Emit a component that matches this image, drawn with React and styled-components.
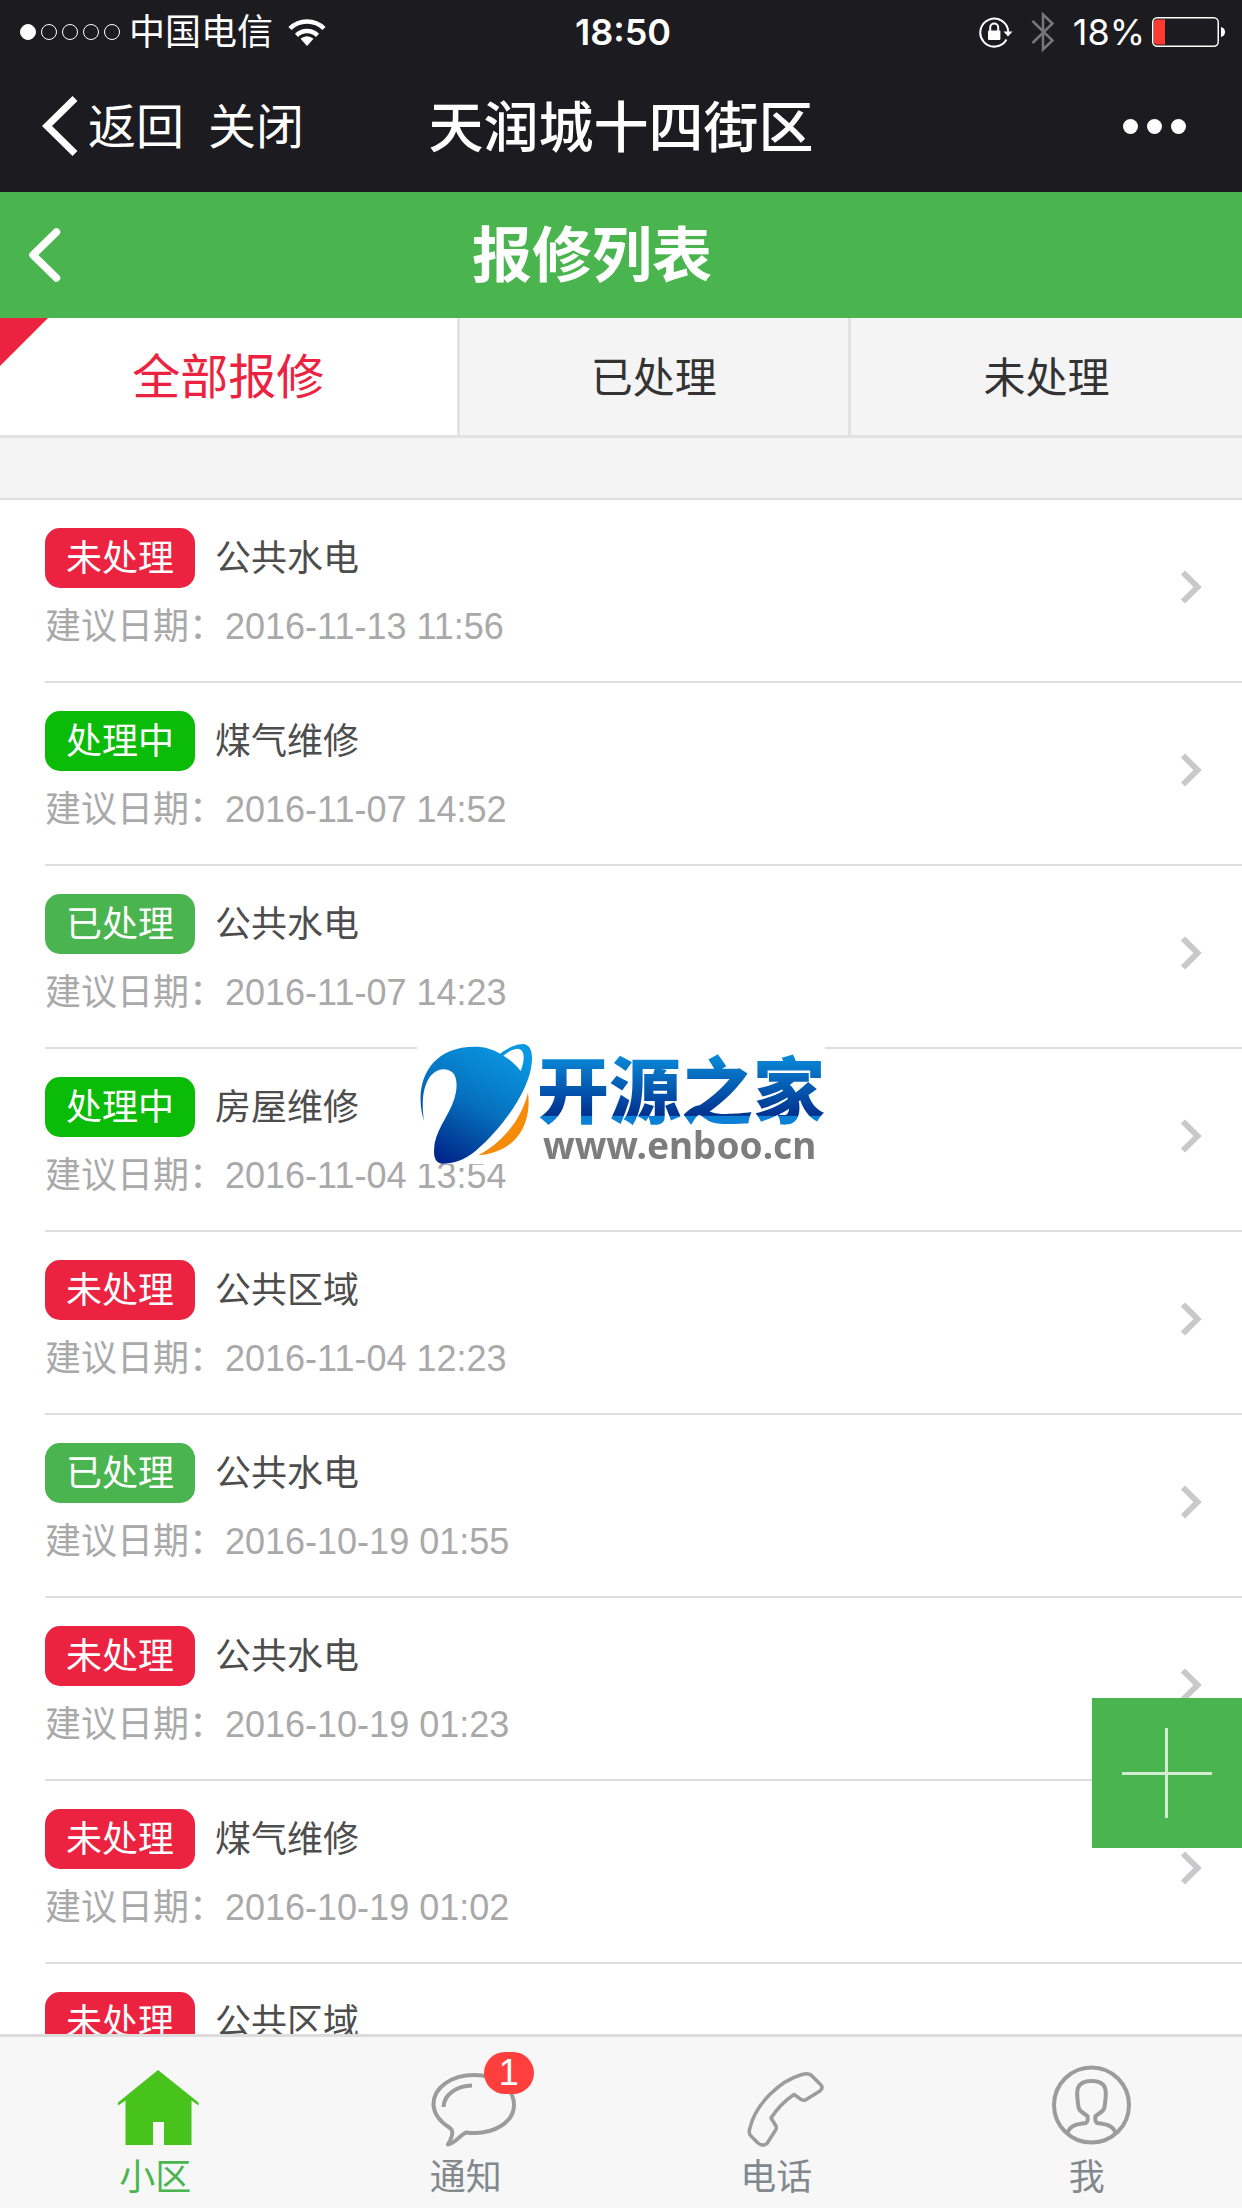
import React, { useState } from "react";
import styled, { createGlobalStyle } from "styled-components";

const GlobalStyle = createGlobalStyle`
  * { box-sizing: border-box; }
  html, body { margin: 0; background: #fff; }
  body, button {
    font-family: "Liberation Sans", "Noto Sans CJK SC", sans-serif;
  }
  button { border: 0; padding: 0; background: none; color: inherit; cursor: pointer; }
  a { color: inherit; text-decoration: none; }
  svg { display: block; flex: none; }
`;

const colors = {
  dark: "#1c1b20",
  green: "#4ab54f",
  brightGreen: "#0abb07",
  red: "#ec2340",
  line: "#dedede",
  panel: "#f4f4f4",
};

const Screen = styled.div`
  display: flex;
  flex-direction: column;
  height: 100vh;
`;

const StatusBar = styled.div`
  display: grid;
  grid-template-columns: 1fr auto 1fr;
  align-items: center;
  height: 60px;
  padding: 2px 16px 0 20px;
  background: ${colors.dark};
  color: #fff;
  font-size: 36px;
  line-height: 58px;
`;

const StatusGroup = styled.div`
  display: flex;
  align-items: center;
  justify-content: ${(p) => (p.$end ? "flex-end" : "flex-start")};
  gap: ${(p) => (p.$end ? "18px" : "15px")};
`;

const SignalDots = styled.div`
  display: flex;
  gap: 5px;
`;

const SignalDot = styled.span`
  width: 16px;
  height: 16px;
  border: 1px solid #fff;
  border-radius: 50%;
  background: ${(p) => (p.$on ? "#fff" : "transparent")};
`;

const Carrier = styled.span`
  margin-left: -6px;
  padding-top: 2px;
`;

const Clock = styled.span`
  font-family: Inter, sans-serif;
  font-weight: 600;
`;

const Percent = styled.span`
  margin-right: -11px;
  font-family: Inter, sans-serif;
`;

const NavBar = styled.header`
  display: grid;
  grid-template-columns: 1fr auto 1fr;
  align-items: center;
  height: 132px;
  padding: 0 42px;
  background: ${colors.dark};
  color: #fff;
`;

const NavActions = styled.div`
  display: flex;
  align-items: center;
  gap: 24px;
`;

const NavButton = styled.button`
  display: flex;
  align-items: center;
  gap: 10px;
  font-size: 48px;
  line-height: 72px;
`;

const NavLabel = styled.span`
  padding-top: 4px;
`;

const NavTitle = styled.h1`
  margin: 0;
  padding-top: 4px;
  font-size: 55px;
  font-weight: 500;
  line-height: 72px;
`;

const MoreButton = styled.button`
  display: flex;
  justify-self: end;
  gap: 9px;
  margin-right: 14px;
  padding: 20px 0;
`;

const MoreDot = styled.span`
  width: 15px;
  height: 15px;
  border-radius: 50%;
  background: #fff;
`;

const PageHeader = styled.div`
  display: flex;
  align-items: center;
  height: 126px;
  padding: 0 90px 0 28px;
  background: ${colors.green};
  color: #fff;
`;

const PageTitle = styled.h2`
  flex: 1;
  margin: 0 30px 0 0;
  padding-top: 4px;
  font-size: 60px;
  font-weight: 700;
  line-height: 84px;
  text-align: center;
`;

const Tabs = styled.div`
  display: grid;
  grid-template-columns: 37% 1fr 1fr;
  height: 120px;
  border-bottom: 3px solid #e2e2e2;
`;

const Tab = styled.button`
  position: relative;
  padding-top: ${(p) => (p.$active ? "2px" : "4px")};
  border-right: 3px solid #e2e2e2;
  background: ${(p) => (p.$active ? "#fff" : colors.panel)};
  color: ${(p) => (p.$active ? colors.red : "#333")};
  font-size: ${(p) => (p.$active ? "48px" : "42px")};
  line-height: 72px;

  &:last-child { border-right: 0; }

  &::before {
    content: "";
    display: ${(p) => (p.$active ? "block" : "none")};
    position: absolute;
    top: 0;
    left: 0;
    border-top: 48px solid ${colors.red};
    border-right: 48px solid transparent;
  }
`;

const ListArea = styled.main`
  flex: 1;
  min-height: 0;
  padding-top: 60px;
  overflow-y: auto;
  scrollbar-width: none;
  background: ${colors.panel};
`;

const List = styled.ul`
  margin: 0;
  padding: 0 0 0 45px;
  list-style: none;
  border-top: 2px solid ${colors.line};
  background: #fff;
`;

const Row = styled.li`
  border-bottom: 2px solid ${colors.line};
`;

const RowLink = styled.a`
  display: flex;
  align-items: center;
  justify-content: space-between;
  min-height: 181px;
  padding: 28px 36px 30px 0;
`;

const RowHead = styled.div`
  display: flex;
  align-items: center;
  gap: 20px;
  margin-bottom: 15px;
`;

const Status = styled.span`
  padding: 2px 21px 0;
  border-radius: 15px;
  background: ${(p) => p.$color};
  color: #fff;
  font-size: 36px;
  line-height: 58px;
`;

const RowTitle = styled.span`
  padding-top: 2px;
  color: #4d4d4d;
  font-size: 36px;
  line-height: 58px;
`;

const RowDate = styled.div`
  min-height: 48px;
  color: #a9a9a9;
  font-size: 36px;
  line-height: 48px;
`;

const AddButton = styled.button`
  position: fixed;
  right: 0;
  bottom: 360px;
  display: flex;
  align-items: center;
  justify-content: center;
  width: 150px;
  height: 150px;
  background: ${colors.green};
`;

const BottomNav = styled.nav`
  display: grid;
  grid-template-columns: repeat(4, 1fr);
  height: 174px;
  border-top: 3px solid #dcdcdc;
  background: #f7f7f8;
`;

const NavItem = styled.a`
  display: flex;
  flex-direction: column;
  align-items: center;
  padding-top: 24px;
  color: ${(p) => (p.$active ? colors.green : "#82888c")};
  font-size: 36px;
  line-height: 58px;
`;

const IconWrap = styled.span`
  position: relative;
`;

const Badge = styled.span`
  position: absolute;
  top: -9px;
  right: -17px;
  width: 50px;
  height: 42px;
  border-radius: 21px;
  background: #ff3e3e;
  color: #fff;
  font-size: 36px;
  line-height: 42px;
  text-align: center;
`;

const Watermark = styled.div`
  position: fixed;
  top: 50%;
  left: 50%;
  display: flex;
  width: 408px;
  height: 120px;
  background: #fff;
  transform: translate(-50%, -50%);
  pointer-events: none;
`;

const BrandText = styled.div`
  display: flex;
  flex-direction: column;
  white-space: nowrap;
`;

const BrandName = styled.span`
  background: linear-gradient(#0a8cda 12%, #00318f 85%, #0a80d6 86%);
  background-clip: text;
  -webkit-background-clip: text;
  color: transparent;
  font-family: "Noto Sans CJK SC", sans-serif;
  font-size: 72px;
  font-weight: 900;
  line-height: 84px;
`;

const BrandUrl = styled.span`
  padding-left: 6px;
  color: #7d7d7d;
  font-family: "Noto Sans", sans-serif;
  font-size: 37px;
  font-weight: 700;
  line-height: 34px;
`;

const WifiIcon = () => (
  <svg width="38" height="28" viewBox="0 0 38 28" fill="none" stroke="#fff" strokeWidth="4.5">
    <path d="M2 10.500a24 24 0 0 1 34 0" />
    <path d="M8.500 17.300a15 15 0 0 1 21 0" />
    <path d="M19 28l-6.500-7.200a9.500 9.500 0 0 1 13 0z" fill="#fff" stroke="none" />
  </svg>
);

const LockIcon = () => (
  <svg width="34" height="32" viewBox="0 0 34 32" fill="none" stroke="#fff">
    <path d="M27.500 23.500A14 14 0 1 1 29.300 16" strokeWidth="2" />
    <path d="M24.500 15.500h9L29 20.500z" fill="#fff" stroke="none" />
    <path d="M11.200 15v-3.500a4 4 0 0 1 8 0V15" strokeWidth="2" />
    <rect x="9" y="14.500" width="12.400" height="9.500" rx="1" fill="#fff" stroke="none" />
  </svg>
);

const BluetoothIcon = () => (
  <svg width="24" height="42" viewBox="0 0 24 42" fill="none" stroke="#77777a" strokeWidth="2.500">
    <path d="M1.500 10l20 19.500L12 38.500V3.500l9.500 9L1.500 32" />
  </svg>
);

const BatteryIcon = () => (
  <svg width="74" height="30" viewBox="0 0 74 30">
    <rect x=".75" y=".75" width="65.500" height="28.500" rx="4.500" fill="none" stroke="#fff" strokeWidth="1.500" />
    <path d="M5 2.500h8v25H5a3 3 0 0 1-3-3v-19a3 3 0 0 1 3-3z" fill="#ff3a2e" />
    <path d="M69 10q4 1 4 5t-4 5z" fill="#fff" />
  </svg>
);

const BackIcon = () => (
  <svg width="36" height="60" viewBox="0 0 36 60" fill="none" stroke="#fff" strokeWidth="7">
    <path d="M33 2.500L5 30l28 27.500" />
  </svg>
);

const HeaderBackIcon = () => (
  <svg width="34" height="54" viewBox="0 0 34 54" fill="none" stroke="#fff" strokeWidth="7.500" strokeLinecap="round" strokeLinejoin="round">
    <path d="M28.500 4L5 27l23.500 23" />
  </svg>
);

const ChevronIcon = () => (
  <svg width="26" height="42" viewBox="0 0 26 42" fill="none" stroke="#c8c8cd" strokeWidth="6">
    <path d="M3 3.500l14.500 14.500L3 32.500" />
  </svg>
);

const PlusIcon = () => (
  <svg width="90" height="90" viewBox="0 0 90 90" stroke="#fff" strokeOpacity=".75" strokeWidth="3">
    <path d="M0 45.500h90M44.500 0v90" />
  </svg>
);

const HomeIcon = () => (
  <svg width="102" height="88" viewBox="0 0 102 88" fill="#47c31b">
    <path d="M54 9L94.500 41.500V44.500L87.500 39.500V84H60V61H49V84H21.500V39.500L14 44.500V41.500z" />
  </svg>
);

const outline = { fill: "none", stroke: "#9c9c9c", strokeWidth: 4, strokeLinejoin: "round" };

const ChatIcon = () => (
  <svg width="102" height="88" viewBox="0 0 102 88" {...outline}>
    <path d="M59 14C36 14 18 27 18.500 44C19 54 27 62 35 67C39 70 38 75 33 83.500C41 82 45 74 51 71.500C80 75 99 60 99 44C99 27 81 14 59 14z" />
    <path d="M57 24.500C42 25 29 33 28.500 46" />
  </svg>
);

const PhoneIcon = () => (
  <svg width="102" height="88" viewBox="0 0 102 88" {...outline} strokeWidth="3.500">
    <path d="M77 13.500Q84 11.500 87 15L96 24Q98.500 27 95 30L82 38Q78 41 74 37L69 33.500Q55 43 46 57L51 65Q52 68 50 70L42 82.500Q38 86 33 82L26 75Q23 72 25 67C30 44 54 20 77 13.500z" />
  </svg>
);

const PersonIcon = () => (
  <svg width="102" height="88" viewBox="0 0 102 88" {...outline}>
    <circle cx="55.500" cy="44" r="37.500" />
    <path d="M31.500 72C34 64 42 63 50 62Q52.500 60 51.500 55C46 51 43 50 42.500 46C41 34 37 20 55.500 20S70 34 68.500 46C68 50 65 51 59.500 55Q58.500 60 61 62C69 63 77 64 79.500 72" />
  </svg>
);

const BrandMark = () => (
  <svg width="120" height="120" viewBox="51 72 360 360">
    <defs>
      <linearGradient id="brandBlue" x1=".75" y1="0" x2=".25" y2="1">
        <stop offset="0" stopColor="#0a98e4" />
        <stop offset=".5" stopColor="#0671be" />
        <stop offset="1" stopColor="#00268a" />
      </linearGradient>
    </defs>
    <path fill="url(#brandBlue)" d="M72 303C40 200 80 80 225 80C255 80 280 88 300 101C330 80 350 72 370 72C398 75 400 110 392 150C375 230 300 330 230 390C190 425 150 432 125 431C100 425 100 400 104 370C112 320 160 270 168 215C175 170 160 148 130 148C85 150 58 210 72 303zM310 107Q340 124 362 153C375 120 376 87 352 86Q332 88 310 107z" />
    <path fill="#f68b08" d="M384 218C395 300 360 395 235 406C300 370 360 310 384 218z" />
  </svg>
);

const statusColors = {
  未处理: colors.red,
  处理中: colors.brightGreen,
  已处理: colors.green,
};

const repairs = [
  { status: "未处理", title: "公共水电", date: "2016-11-13 11:56" },
  { status: "处理中", title: "煤气维修", date: "2016-11-07 14:52" },
  { status: "已处理", title: "公共水电", date: "2016-11-07 14:23" },
  { status: "处理中", title: "房屋维修", date: "2016-11-04 13:54" },
  { status: "未处理", title: "公共区域", date: "2016-11-04 12:23" },
  { status: "已处理", title: "公共水电", date: "2016-10-19 01:55" },
  { status: "未处理", title: "公共水电", date: "2016-10-19 01:23" },
  { status: "未处理", title: "煤气维修", date: "2016-10-19 01:02" },
  { status: "未处理", title: "公共区域" },
];

const tabs = ["全部报修", "已处理", "未处理"];

const navItems = [
  { label: "小区", Icon: HomeIcon },
  { label: "通知", Icon: ChatIcon, count: 1 },
  { label: "电话", Icon: PhoneIcon },
  { label: "我", Icon: PersonIcon },
];

export default function App() {
  const [tab, setTab] = useState(tabs[0]);
  const visible = tab === tabs[0] ? repairs : repairs.filter((r) => r.status === tab);

  return (
    <Screen>
      <GlobalStyle />
      <StatusBar>
        <StatusGroup>
          <SignalDots>
            {[1, 0, 0, 0, 0].map((on, i) => (
              <SignalDot key={i} $on={on} />
            ))}
          </SignalDots>
          <Carrier>中国电信</Carrier>
          <WifiIcon />
        </StatusGroup>
        <Clock>18:50</Clock>
        <StatusGroup $end>
          <LockIcon />
          <BluetoothIcon />
          <Percent>18%</Percent>
          <BatteryIcon />
        </StatusGroup>
      </StatusBar>

      <NavBar>
        <NavActions>
          <NavButton type="button">
            <BackIcon />
            <NavLabel>返回</NavLabel>
          </NavButton>
          <NavButton type="button">
            <NavLabel>关闭</NavLabel>
          </NavButton>
        </NavActions>
        <NavTitle>天润城十四街区</NavTitle>
        <MoreButton type="button" aria-label="更多">
          <MoreDot />
          <MoreDot />
          <MoreDot />
        </MoreButton>
      </NavBar>

      <PageHeader>
        <button type="button" aria-label="返回">
          <HeaderBackIcon />
        </button>
        <PageTitle>报修列表</PageTitle>
      </PageHeader>

      <Tabs>
        {tabs.map((name) => (
          <Tab key={name} type="button" $active={name === tab} onClick={() => setTab(name)}>
            {name}
          </Tab>
        ))}
      </Tabs>

      <ListArea>
        <List>
          {visible.map((item, i) => (
            <Row key={i}>
              <RowLink href="#">
                <div>
                  <RowHead>
                    <Status $color={statusColors[item.status]}>{item.status}</Status>
                    <RowTitle>{item.title}</RowTitle>
                  </RowHead>
                  <RowDate>{item.date && `建议日期：${item.date}`}</RowDate>
                </div>
                <ChevronIcon />
              </RowLink>
            </Row>
          ))}
        </List>
      </ListArea>

      <BottomNav>
        {navItems.map(({ label, Icon, count }, i) => (
          <NavItem key={label} href="#" $active={i === 0}>
            <IconWrap>
              <Icon />
              {count && <Badge>{count}</Badge>}
            </IconWrap>
            {label}
          </NavItem>
        ))}
      </BottomNav>

      <AddButton type="button" aria-label="新增报修">
        <PlusIcon />
      </AddButton>

      <Watermark>
        <BrandMark />
        <BrandText>
          <BrandName>开源之家</BrandName>
          <BrandUrl>www.enboo.cn</BrandUrl>
        </BrandText>
      </Watermark>
    </Screen>
  );
}
